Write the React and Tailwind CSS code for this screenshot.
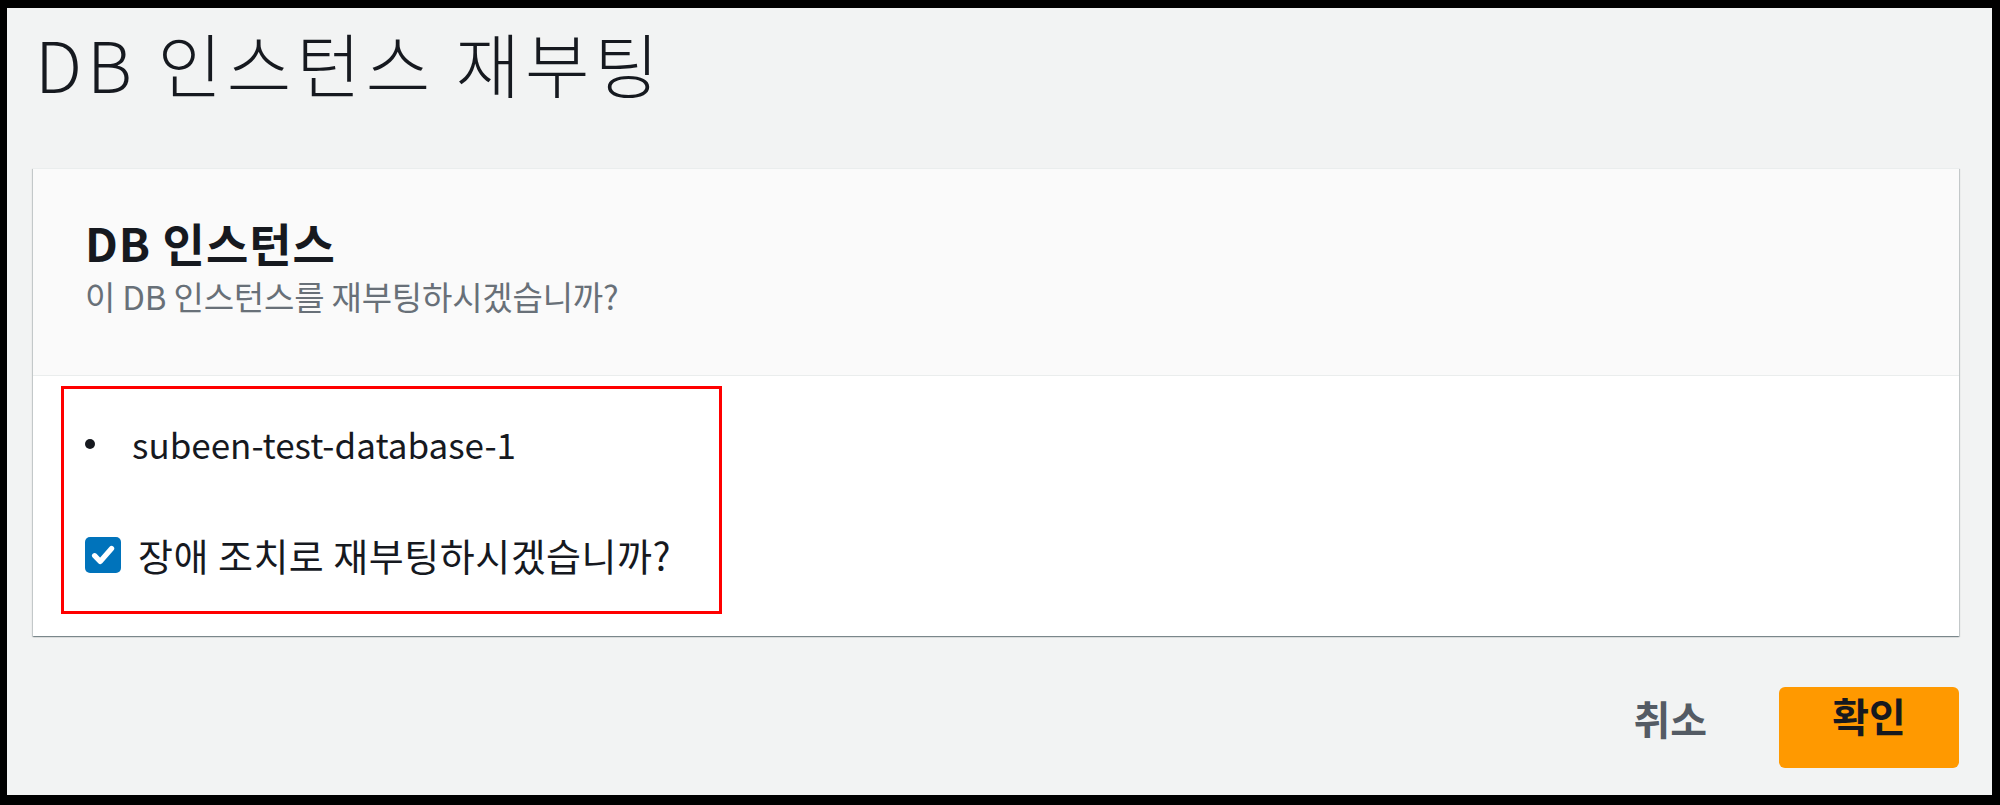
import React from 'react';

const font = { fontFamily: '"Noto Sans CJK KR", "Noto Sans", sans-serif' };

function CheckIcon() {
    return (
        <svg viewBox="0 0 16 16" className="w-[28px] h-[28px]" fill="none">
            <path d="M3.2 8.4l3.2 3.3L12.9 4.3" stroke="white" strokeWidth="3" strokeLinecap="round" strokeLinejoin="round" />
        </svg>
    );
}

export default function App() {
    return (
        <div className="w-[2000px] h-[805px] bg-black pt-[8px] pl-[7px] pr-[8px] pb-[10px] overflow-hidden">
            <div className="w-full h-full bg-[#f2f3f3] pl-[26px] pr-[33px] pt-[20px]" style={font}>
                <h1 className="text-[70px] leading-[70px] font-light tracking-[5px] text-[#16191f] pl-[2px]">DB 인스턴스 재부팅</h1>

                <div className="mt-[70px] bg-white border-t border-[#eaeded] shadow-[0_1px_1px_0_rgba(0,28,36,0.3),1px_1px_1px_0_rgba(0,28,36,0.15),-1px_1px_1px_0_rgba(0,28,36,0.15)]">
                    <div className="bg-[#fafafa] border-b border-[#eaeded] pl-[52px] pt-[50px] pb-[63px]">
                        <h2 className="text-[46px] leading-[46px] font-bold tracking-[1px] text-[#16191f]">DB 인스턴스</h2>
                        <p className="mt-[15px] text-[33px] leading-[32px] tracking-[-0.2px] text-[#687078]">이 DB 인스턴스를 재부팅하시겠습니까?</p>
                    </div>

                    <div className="pl-[28px] pt-[10px] pb-[22px]">
                        <div className="w-[661px] border-[3px] border-[#ff0000] pt-[37px] pb-[37px]">
                            <div className="flex items-center">
                                <span className="ml-[21px] w-[10px] h-[10px] rounded-full bg-[#16191f]"></span>
                                <span className="ml-[37px] text-[35px] leading-[35px] text-[#16191f]">subeen-test-database-1</span>
                            </div>
                            <label className="mt-[75px] flex items-center">
                                <span className="ml-[21px] w-[36px] h-[36px] rounded-[5px] bg-[#0073bb] flex items-center justify-center">
                                    <CheckIcon />
                                </span>
                                <span className="ml-[17px] text-[38px] leading-[38px] tracking-[0.5px] text-[#16191f]">장애 조치로 재부팅하시겠습니까?</span>
                            </label>
                        </div>
                    </div>
                </div>

                <div className="mt-[51px] flex justify-end items-start">
                    <button className="mt-[11px] mr-[72px] text-[40px] leading-[40px] font-bold text-[#545b64]">취소</button>
                    <button className="w-[180px] h-[81px] pt-[8px] rounded-[6px] bg-[#ff9900] text-[40px] leading-[40px] font-bold text-[#16191f] flex justify-center items-start">확인</button>
                </div>
            </div>
        </div>
    );
}
